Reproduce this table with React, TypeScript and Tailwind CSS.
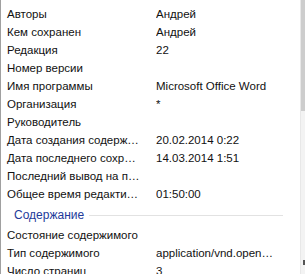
import React from 'react';

type Prop = { label: string; value?: string };

const ORIGIN: Prop[] = [
  { label: 'Авторы', value: 'Андрей' },
  { label: 'Кем сохранен', value: 'Андрей' },
  { label: 'Редакция', value: '22' },
  { label: 'Номер версии' },
  { label: 'Имя программы', value: 'Microsoft Office Word' },
  { label: 'Организация', value: '*' },
  { label: 'Руководитель' },
  { label: 'Дата создания содержимого', value: '20.02.2014 0:22' },
  { label: 'Дата последнего сохранения', value: '14.03.2014 1:51' },
  { label: 'Последний вывод на печать' },
  { label: 'Общее время редактирования', value: '01:50:00' },
];

const CONTENT: Prop[] = [
  { label: 'Состояние содержимого' },
  { label: 'Тип содержимого', value: 'application/vnd.openxmlformats' },
  { label: 'Число страниц', value: '3' },
];

const Row = ({ label, value }: Prop) => (
  <div className="flex h-[18px] items-center">
    <div className="w-[142px] shrink-0 truncate pl-[7px]">{label}</div>
    <div className="ml-[14px] w-[118px] truncate">{value}</div>
  </div>
);

export default function App() {
  return (
    <div className="relative h-[274px] w-[305px] overflow-hidden bg-white text-[11.5px] leading-[18px] text-[#111] [font-family:'Liberation_Sans',Arial,sans-serif]">
      <div className="absolute left-0 top-0 h-full w-px bg-[#a0a0a0]" />
      <div className="pt-[5px] pr-[5px]">
        {ORIGIN.map((p) => (
          <Row key={p.label} {...p} />
        ))}
        <div className="flex h-[23px] items-center pl-[14px] pr-[17px]">
          <span className="text-[12px] text-[#1e3a9a]">Содержание</span>
          <div className="ml-[5px] mt-[1px] h-px flex-1 bg-[#e2e2e2]" />
        </div>
        {CONTENT.map((p) => (
          <Row key={p.label} {...p} />
        ))}
      </div>
      {/* scrollbar */}
      <div className="absolute right-0 top-0 h-full w-[5px] border-l border-[#e8e8e8] bg-[#f3f3f3]">
        <div className="h-[111px] bg-[#cdcdcd]" />
        <div className="absolute left-[2px] top-[260px] h-[5px] w-[2px] bg-[#555]" />
      </div>
    </div>
  );
}
